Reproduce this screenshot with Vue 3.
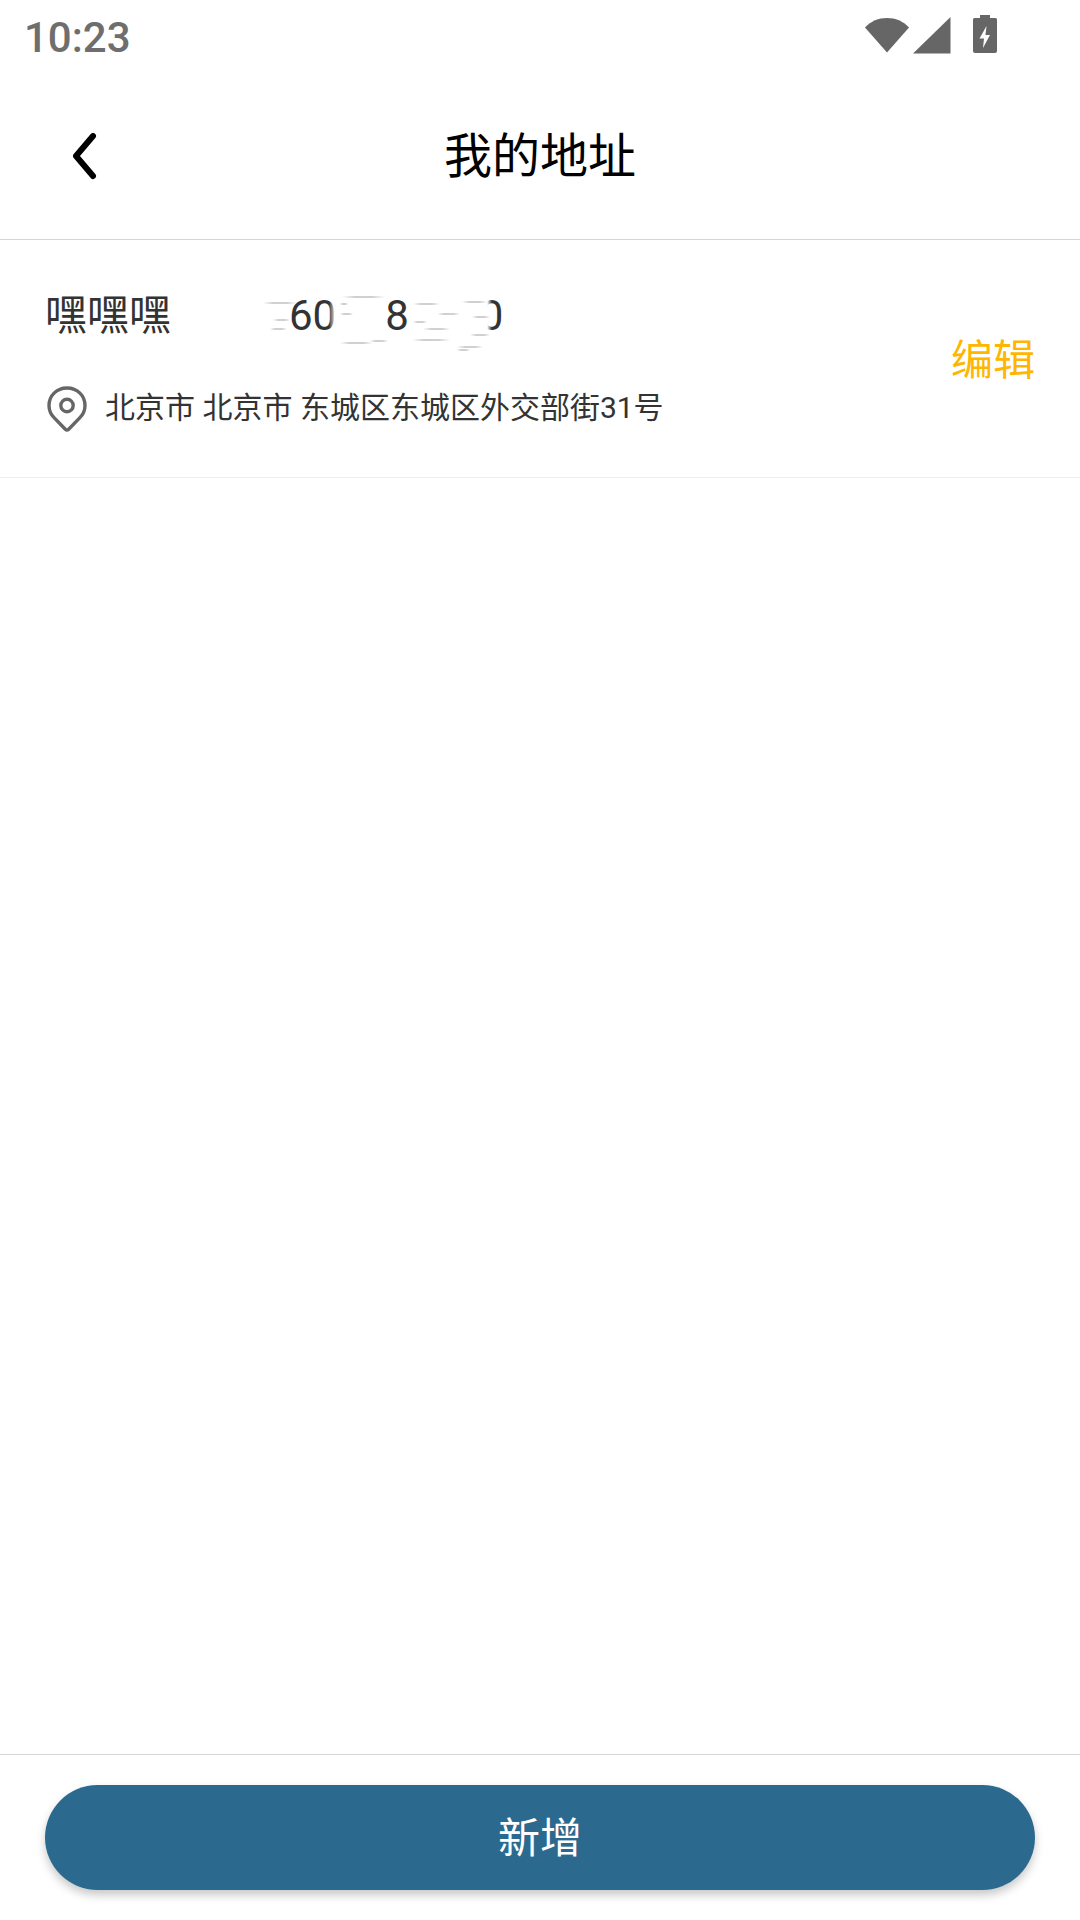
<script setup>
const smudges = [
  [263, 301, 34], [273, 318, 17], [270, 327, 17], [342, 295, 43], [340, 302, 8],
  [340, 312, 13], [340, 341, 33], [370, 339, 18], [413, 302, 27], [437, 312, 23],
  [462, 300, 25], [472, 315, 18], [413, 320, 14], [423, 327, 27], [470, 333, 20],
  [412, 338, 38], [457, 345, 26], [457, 348, 13]
]
function smudgeStyle(s) {
  return { left: s[0] - 262 + 'px', top: s[1] - 281 + 'px', width: s[2] + 'px' }
}
</script>

<template>
  <div class="page">
    <div class="status">
      <span class="time">10:23</span>
      <div class="status-icons">
        <svg class="ic-wifi" width="46" height="38" viewBox="0 0 46 38"><path d="M1 12.500C7 6 14.500 3 23 3s16 3 22 9.500L23 37.500z" fill="#666"/></svg>
        <svg class="ic-signal" width="38" height="38" viewBox="0 0 38 38"><path d="M37.500 1v36.500H0z" fill="#666"/></svg>
        <svg class="ic-batt" width="24" height="40" viewBox="0 0 24 40"><path d="M7 0h10v3h5.500a1.500 1.500 0 0 1 1.500 1.500V36a2 2 0 0 1-2 2H2a2 2 0 0 1-2-2V4.500A1.500 1.500 0 0 1 1.500 3H7z" fill="#666"/><path d="M13.500 11 6.500 23.500h4.500L10 33l7-13h-4.500z" fill="#fff"/></svg>
      </div>
    </div>

    <header class="nav">
      <svg class="back" width="28" height="48" viewBox="0 0 28 48"><path d="M23 3 6 23l17 20" fill="none" stroke="#000" stroke-width="6" stroke-linecap="round" stroke-linejoin="round"/></svg>
      <h1 class="title">我的地址</h1>
    </header>

    <section class="row">
      <div class="info">
        <div class="person">
          <span class="name">嘿嘿嘿</span>
          <div class="phone">
            <span class="d first">60</span>
            <span class="d eight">8</span>
            <span class="d last">0</span>
            <i class="cut-zero"></i>
            <i class="cut-last"></i>
            <i v-for="(s, i) in smudges" :key="i" class="smudge" :style="smudgeStyle(s)"></i>
          </div>
        </div>
        <div class="addr">
          <svg class="pin" width="42" height="48" viewBox="0 0 42 48"><path d="M21 3C10.500 3 3 10.800 3 20.500c0 5 2 9.200 5.300 12.400l11 11.300c1 1 2.400 1 3.400 0l11-11.300c3.300-3.200 5.300-7.400 5.300-12.400C39 10.800 31.500 3 21 3z" fill="none" stroke="#666" stroke-width="3.400" stroke-linejoin="round"/><circle cx="21" cy="20.500" r="6.200" fill="none" stroke="#666" stroke-width="3.400"/></svg>
          <span class="addr-text">北京市 北京市 东城区东城区外交部街31号</span>
        </div>
      </div>
      <span class="edit">编辑</span>
    </section>

    <div class="spacer"></div>

    <footer class="foot">
      <button class="add">新增</button>
    </footer>
  </div>
</template>

<style scoped>
.page {
  width: 1080px;
  height: 1920px;
  display: flex;
  flex-direction: column;
  background: #fff;
  font-family: Roboto, "Noto Sans CJK SC", sans-serif;
  overflow: hidden;
}
.status {
  height: 72px;
  display: flex;
  align-items: center;
  justify-content: space-between;
  padding: 0 83px 0 24px;
}
.time {
  font-size: 42px;
  font-weight: 500;
  color: #6e6e6e;
  line-height: 72px;
  margin-top: 3px;
}
.status-icons {
  display: flex;
  align-items: flex-start;
  height: 72px;
}
.ic-wifi { margin-top: 15px; }
.ic-signal { margin: 16px 0 0 3px; }
.ic-batt { margin: 15px 0 0 22px; }
.nav {
  height: 167px;
  border-bottom: 1px solid #d4d4d4;
  display: flex;
  align-items: center;
  justify-content: center;
  position: relative;
}
.back {
  position: absolute;
  left: 70px;
  top: 61px;
}
.title {
  margin: 0 0 -2px;
  font-size: 48px;
  font-weight: 400;
  color: #000;
  line-height: 1;
}
.row {
  height: 237px;
  border-bottom: 1px solid #eeeeee;
  display: flex;
  align-items: center;
  justify-content: space-between;
  padding: 0 45px 0 46px;
}
.info {
  display: flex;
  flex-direction: column;
  gap: 33px;
  padding-bottom: 3px;
}
.person {
  display: flex;
  align-items: center;
  height: 70px;
}
.name {
  font-size: 42px;
  color: #333;
  width: 216px;
  margin-left: -1px;
  margin-bottom: 10px;
}
.phone {
  position: relative;
  width: 250px;
  height: 70px;
  margin-left: 1px;
  font-size: 42px;
  color: #333;
  display: flex;
  align-items: center;
  line-height: 70px;
}
.d { display: block; position: relative; top: -1px; }
.first { margin-left: 27px; }
.eight { margin-left: 49px; }
.last { margin-left: 71px; width: 24px; }
.cut-zero {
  position: absolute;
  left: 67px;
  top: 14px;
  width: 10px;
  height: 42px;
  background: linear-gradient(90deg, rgba(255, 255, 255, 0), #fff 70%);
}
.cut-last {
  position: absolute;
  left: 214px;
  top: 14px;
  width: 16px;
  height: 42px;
  background: linear-gradient(90deg, #fff 70%, rgba(255, 255, 255, 0));
}
.smudge {
  position: absolute;
  height: 2px;
  background: linear-gradient(90deg, rgba(215, 215, 215, 0), #d0d0d0 30%, #d0d0d0 70%, rgba(215, 215, 215, 0));
}
.addr {
  display: flex;
  align-items: center;
  gap: 17px;
  font-size: 30px;
  color: #333;
  line-height: 48px;
}
.addr-text { position: relative; top: -1px; }
.pin { display: block; }
.edit {
  font-size: 42px;
  color: #ffb600;
  line-height: 1;
  margin-top: 4px;
}
.spacer { flex: 1; }
.foot {
  height: 166px;
  border-top: 1px solid #d4d4d4;
  padding: 30px 45px 0;
  box-sizing: border-box;
}
.add {
  display: block;
  width: 100%;
  height: 105px;
  border: 0;
  border-radius: 53px;
  padding: 0 0 7px;
  background: #2b6a8e;
  color: #fff;
  font: inherit;
  font-size: 42px;
  box-shadow: 0 5px 10px rgba(0, 0, 0, 0.22);
}
</style>
